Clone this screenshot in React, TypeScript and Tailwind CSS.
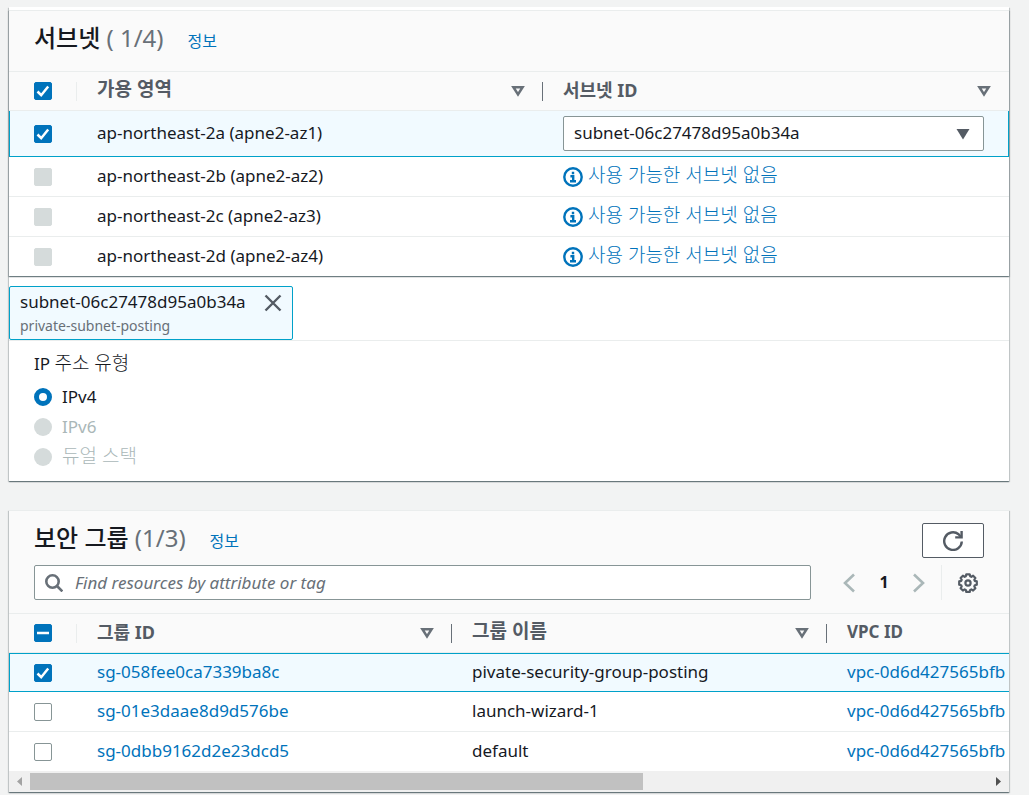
import { useState } from "react";
import type { InputHTMLAttributes, ReactNode } from "react";
import clsx from "clsx";

interface Zone {
  id: string;
  name: string;
  subnet?: string;
}

interface SecurityGroup {
  id: string;
  name: string;
  vpc: string;
}

const zones: Zone[] = [
  { id: "2a", name: "ap-northeast-2a (apne2-az1)", subnet: "subnet-06c27478d95a0b34a" },
  { id: "2b", name: "ap-northeast-2b (apne2-az2)" },
  { id: "2c", name: "ap-northeast-2c (apne2-az3)" },
  { id: "2d", name: "ap-northeast-2d (apne2-az4)" },
];

const groups: SecurityGroup[] = [
  { id: "sg-058fee0ca7339ba8c", name: "pivate-security-group-posting", vpc: "vpc-0d6d427565bfb" },
  { id: "sg-01e3daae8d9d576be", name: "launch-wizard-1", vpc: "vpc-0d6d427565bfb" },
  { id: "sg-0dbb9162d2e23dcd5", name: "default", vpc: "vpc-0d6d427565bfb" },
];

const ipTypes = [
  { value: "ipv4", label: "IPv4", disabled: false },
  { value: "ipv6", label: "IPv6", disabled: true },
  { value: "dual", label: "듀얼 스택", disabled: true, korean: true },
];

const panelShadow =
  "shadow-[0_1px_1px_0_rgba(0,28,36,0.4),1px_1px_1px_0_rgba(0,28,36,0.15),-1px_1px_1px_0_rgba(0,28,36,0.15)]";

interface CheckboxProps extends InputHTMLAttributes<HTMLInputElement> {
  mixed?: boolean;
}

const Checkbox = ({ mixed, ...props }: CheckboxProps) => {
  const filled = mixed || props.checked;
  return (
    <span className="grid size-[18px]">
      <input
        type="checkbox"
        className={clsx(
          "col-start-1 row-start-1 size-[18px] appearance-none rounded-xs border",
          props.disabled
            ? "border-[#d5dbdb] bg-[#d5dbdb]"
            : filled
              ? "border-[#0073bb] bg-[#0073bb]"
              : "border-[#879596] bg-white"
        )}
        {...props}
      />
      {filled && (
        <svg viewBox="0 0 18 18" className="pointer-events-none col-start-1 row-start-1" fill="none" stroke="#fff">
          {mixed ? (
            <path d="M3 9h12" strokeWidth="2.5" />
          ) : (
            <path d="M3.5 9.5l3.7 3.7L14.2 4.5" strokeWidth="2.5" />
          )}
        </svg>
      )}
    </span>
  );
};

const SortIcon = () => (
  <svg viewBox="0 0 14 12" width="14" height="12" fill="none" stroke="#687078" strokeWidth="2.5">
    <path d="M2.4 2.2h9.2L7 9.4z" />
  </svg>
);

const InfoIcon = () => (
  <svg viewBox="0 0 20 20" width="20" height="20" fill="none" stroke="#0073bb" strokeWidth="2.4">
    <circle cx="10" cy="10" r="8.7" />
    <path d="M10 4.8v2.4M7.4 9.2h2.8v5M7 14.2h6" />
  </svg>
);

interface HeaderCellProps {
  children: ReactNode;
  sortable?: boolean;
  divider?: boolean;
  textClass?: string;
}

const HeaderCell = ({ children, sortable = true, divider = true, textClass }: HeaderCellProps) => (
  <th className="border-b border-[#eaeded] p-0 text-left font-bold text-[#545b64]">
    <div className="flex h-[38px] items-center pl-5">
      <span className={clsx("flex-1", textClass)}>{children}</span>
      {sortable && (
        <button type="button" aria-label="정렬" className={divider ? "mr-[17px]" : "mr-[18px]"}>
          <SortIcon />
        </button>
      )}
      {divider && <span className="h-[19px] w-px bg-[#687078]" />}
    </div>
  </th>
);

const SelectAllCell = ({ children }: { children: ReactNode }) => (
  <th className="border-b border-[#eaeded] p-0">
    <div className="flex h-[38px] items-center justify-between pl-[25px]">
      {children}
      <span className="h-[19px] w-px bg-[#eaeded]" />
    </div>
  </th>
);

const Title = ({ title, count }: { title: string; count: string }) => (
  <div className="flex items-baseline">
    <h2 className="text-[24px] leading-8 font-medium text-[#16191f]">
      {title} <span className="font-normal text-[#687078]">{count}</span>
    </h2>
    <a href="#" className="ml-6 text-[16px] text-[#0073bb]">
      정보
    </a>
  </div>
);

const SubnetPanel = () => {
  const [subnet, setSubnet] = useState("subnet-06c27478d95a0b34a");
  const [ipType, setIpType] = useState("ipv4");

  return (
    <section className={clsx("bg-white pt-[3px]", panelShadow)}>
      <div className={clsx("border-t border-[#eaeded] bg-white", panelShadow)}>
        <div className="h-[61px] border-b border-[#eaeded] bg-[#fafafa] px-[25px] pt-[11px]">
          <Title title="서브넷" count="( 1/4)" />
        </div>
        <table className="w-full table-fixed border-separate border-spacing-0">
          <colgroup>
            <col className="w-[68px]" />
            <col />
            <col />
          </colgroup>
          <thead className="bg-[#fafafa]">
            <tr>
              <SelectAllCell>
                <Checkbox checked readOnly aria-label="모두 선택" />
              </SelectAllCell>
              <HeaderCell textClass="pb-1 text-[19px]">가용 영역</HeaderCell>
              <HeaderCell textClass="pb-[2px] text-[18px]" divider={false}>
                서브넷 ID
              </HeaderCell>
            </tr>
          </thead>
          <tbody>
            {zones.map((zone, i) => {
              const selected = Boolean(zone.subnet);
              const last = i === zones.length - 1;
              const cell = clsx(
                "p-0",
                selected && "h-[46px] border-b border-[#00a1c9] bg-[#f1faff]",
                !selected && !last && "h-10 border-b border-[#eaeded]",
                last && "h-[39px]"
              );
              return (
                <tr key={zone.id}>
                  <td className={clsx(cell, selected && "border-l")}>
                    <div className={selected ? "pl-6" : "pl-[25px]"}>
                      <Checkbox checked={selected} disabled={!selected} readOnly aria-label={zone.name} />
                    </div>
                  </td>
                  <td className={cell}>
                    <div className="pb-[2px] pl-5">{zone.name}</div>
                  </td>
                  <td className={clsx(cell, selected && "border-r")}>
                    {selected ? (
                      <div className="grid items-center pr-6 pl-5">
                        <select
                          aria-label="서브넷 ID"
                          value={subnet}
                          onChange={(e) => setSubnet(e.target.value)}
                          className="col-start-1 row-start-1 h-[35px] w-full appearance-none rounded-xs border border-[#879596] bg-white px-[10px] pb-[2px]"
                        >
                          <option>{zone.subnet}</option>
                        </select>
                        <svg
                          viewBox="0 0 14 12"
                          width="14"
                          height="12"
                          fill="#545b64"
                          className="pointer-events-none col-start-1 row-start-1 mr-[14px] justify-self-end"
                        >
                          <path d="M0.5 1h13L7 11.5z" />
                        </svg>
                      </div>
                    ) : (
                      <div className="flex items-center gap-[5px] pl-5 text-[#0073bb]">
                        <InfoIcon />
                        <span className="pb-1 text-[19px] font-light">사용 가능한 서브넷 없음</span>
                      </div>
                    )}
                  </td>
                </tr>
              );
            })}
          </tbody>
        </table>
      </div>

      <div className="flex border-b border-[#eaeded] pt-[10px]">
        <div className="flex h-[54px] items-start gap-[18px] rounded-xs border border-[#00a1c9] bg-[#f1faff] px-[10px] pt-[3px]">
          <div>
            <div className="leading-6">subnet-06c27478d95a0b34a</div>
            <div className="text-[14px] leading-6 text-[#687078]">private-subnet-posting</div>
          </div>
          <button type="button" aria-label="제거" className="mt-1">
            <svg viewBox="0 0 18 18" width="18" height="18" fill="none" stroke="#545b64" strokeWidth="2.4">
              <path d="M1.5 1.5l15 15M16.5 1.5l-15 15" />
            </svg>
          </button>
        </div>
      </div>

      <fieldset className="px-[25px] pt-[10px] pb-[9px]">
        <legend className="float-left mb-[6px] w-full leading-6">
          IP <span className="text-[19px] font-light">주소 유형</span>
        </legend>
        {ipTypes.map((type) => (
          <label
            key={type.value}
            className={clsx("clear-both flex h-[30px] items-center gap-[10px]", type.disabled && "text-[#aab7b8]")}
          >
            <input
              type="radio"
              name="ip-type"
              value={type.value}
              checked={ipType === type.value}
              disabled={type.disabled}
              onChange={() => setIpType(type.value)}
              className="size-[18px] appearance-none rounded-full bg-white checked:border-[5px] checked:border-[#0073bb] disabled:bg-[#d5dbdb]"
            />
            <span className={type.korean ? "pb-[2px] text-[19px] font-light" : ""}>{type.label}</span>
          </label>
        ))}
      </fieldset>
    </section>
  );
};

const SecurityGroupPanel = () => {
  const [selected, setSelected] = useState<string[]>(["sg-058fee0ca7339ba8c"]);
  const [query, setQuery] = useState("");

  const toggle = (id: string) => {
    setSelected((prev) => (prev.includes(id) ? prev.filter((x) => x !== id) : [...prev, id]));
  };

  return (
    <section className={clsx("border-t border-[#eaeded] bg-white", panelShadow)}>
      <div className="border-b border-[#eaeded] bg-[#fafafa] px-[25px] pt-[11px] pb-[13px]">
        <div className="flex items-start justify-between">
          <Title title="보안 그룹" count="(1/3)" />
          <button
            type="button"
            aria-label="새로 고침"
            className="mt-px flex h-[35px] w-[62px] items-center justify-center rounded-xs border border-[#545b64] bg-white"
          >
            <svg viewBox="0 0 20 20" width="20" height="20" fill="none" stroke="#545b64" strokeWidth="2.4">
              <path d="M18.8 10.5a8.8 8.8 0 1 1-3.2-7.2L18 6" />
              <path d="M18.6 0v6.4h-6.4" />
            </svg>
          </button>
        </div>
        <div className="mt-[7px] flex items-center">
          <label className="flex h-[35px] flex-1 items-center gap-3 rounded-xs border border-[#879596] bg-white px-[10px]">
            <svg viewBox="0 0 18 18" width="18" height="18" fill="none" stroke="#687078" strokeWidth="2.6">
              <circle cx="7.5" cy="7.5" r="6.2" />
              <path d="M12 12l5.4 5.4" />
            </svg>
            <input
              type="text"
              aria-label="보안 그룹 검색"
              value={query}
              onChange={(e) => setQuery(e.target.value)}
              placeholder="Find resources by attribute or tag"
              className="flex-1 outline-none placeholder:text-[#687078] placeholder:italic"
            />
          </label>
          <div className="ml-8 flex h-[35px] items-center">
            <button type="button" aria-label="이전 페이지">
              <svg viewBox="0 0 12 20" width="12" height="20" fill="none" stroke="#aab7b8" strokeWidth="2.6">
                <path d="M11 1.5L2 10l9 8.5" />
              </svg>
            </button>
            <button type="button" className="w-[58px] pb-[2px] text-center text-[16px] font-bold text-[#16191f]">
              1
            </button>
            <button type="button" aria-label="다음 페이지">
              <svg viewBox="0 0 12 20" width="12" height="20" fill="none" stroke="#aab7b8" strokeWidth="2.6">
                <path d="M1 1.5L10 10l-9 8.5" />
              </svg>
            </button>
            <span className="mr-4 ml-4 h-full w-px bg-[#eaeded]" />
            <button type="button" aria-label="기본 설정" className="mr-[6px]">
              <svg viewBox="0 0 20 20" width="20" height="20" fill="none" stroke="#545b64" strokeWidth="2.2">
                <path
                  strokeLinejoin="round"
                  d="M8.3 1.3h3.4l.5 2 1.1.5 1.8-1.1 2.3 2.3-1.1 1.8.5 1.1 2 .5v3.4l-2 .5-.5 1.1 1.1 1.8-2.3 2.3-1.8-1.1-1.1.5-.5 2H8.3l-.5-2-1.1-.5-1.8 1.1-2.3-2.3 1.1-1.8-.5-1.1-2-.5V8.4l2-.5.5-1.1-1.1-1.8 2.3-2.3 1.8 1.1 1.1-.5z"
                />
                <circle cx="10" cy="10" r="2.6" />
              </svg>
            </button>
          </div>
        </div>
      </div>

      <div className="overflow-hidden">
        <table className="w-[1568px] table-fixed border-separate border-spacing-0">
          <colgroup>
            <col className="w-[68px]" />
            <col className="w-[375px]" />
            <col className="w-[375px]" />
            <col />
          </colgroup>
          <thead className="bg-[#fafafa]">
            <tr>
              <SelectAllCell>
                <Checkbox mixed readOnly aria-label="모두 선택" />
              </SelectAllCell>
              <HeaderCell textClass="pb-[2px] text-[18px]">그룹 ID</HeaderCell>
              <HeaderCell textClass="pb-1 text-[19px]">그룹 이름</HeaderCell>
              <HeaderCell textClass="pb-[2px]" sortable={false}>
                VPC ID
              </HeaderCell>
            </tr>
          </thead>
          <tbody>
            {groups.map((group, i) => {
              const active = selected.includes(group.id);
              const last = i === groups.length - 1;
              const cell = clsx(
                "p-0",
                active || last ? "h-[39px]" : "h-10",
                active ? "border-y border-[#00a1c9] bg-[#f1faff]" : "border-[#eaeded]",
                !active && !last && "border-b"
              );
              return (
                <tr key={group.id}>
                  <td className={clsx(cell, active && "border-l")}>
                    <div className={active ? "pl-6" : "pl-[25px]"}>
                      <Checkbox checked={active} onChange={() => toggle(group.id)} aria-label={group.id} />
                    </div>
                  </td>
                  <td className={cell}>
                    <div className="pb-[2px] pl-5">
                      <a href="#" className="text-[#0073bb]">
                        {group.id}
                      </a>
                    </div>
                  </td>
                  <td className={cell}>
                    <div className="pb-[2px] pl-5">{group.name}</div>
                  </td>
                  <td className={cell}>
                    <div className="pb-[2px] pl-5">
                      <a href="#" className="text-[#0073bb]">
                        {group.vpc}
                      </a>
                    </div>
                  </td>
                </tr>
              );
            })}
          </tbody>
        </table>
      </div>

      {/* horizontal scrollbar */}
      <div className="flex h-[21px] items-center bg-[#f0f0f0]">
        <span className="flex w-[21px] justify-center">
          <svg viewBox="0 0 5 9" width="5" height="9" fill="#a3a3a3">
            <path d="M5 0v9L0 4.5z" />
          </svg>
        </span>
        <div className="h-[17px] flex-1">
          <div className="h-full w-[64%] bg-[#c1c1c1]" />
        </div>
        <span className="flex w-[21px] justify-center">
          <svg viewBox="0 0 5 9" width="5" height="9" fill="#505050">
            <path d="M0 0v9l5-4.5z" />
          </svg>
        </span>
      </div>
    </section>
  );
};

const App = () => {
  return (
    <main className="flex min-h-screen flex-col gap-[29px] bg-[#f2f3f3] pt-[7px] pr-5 pl-[9px] font-['Noto_Sans','Noto_Sans_CJK_KR',sans-serif] text-[17px] leading-6 text-[#16191f]">
      <SubnetPanel />
      <SecurityGroupPanel />
    </main>
  );
};

export default App;
